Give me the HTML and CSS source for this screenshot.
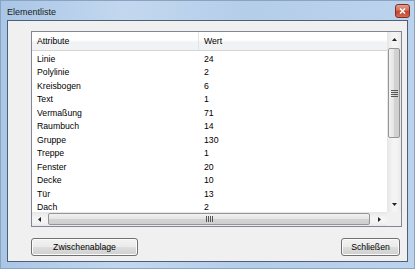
FILE: index.html
```html
<!DOCTYPE html>
<html>
<head>
  <title>Elementliste</title>
  <link rel="stylesheet" href="styles.css">
</head>
<body>
  <div class="window">
    <div class="titlebar">
      <span class="title">Elementliste</span>
      <span class="close-btn">
        <svg width="7" height="6" viewBox="0 0 7 6"><path d="M1 0.5 L6 5.5 M6 0.5 L1 5.5" stroke="#fff" stroke-width="1.6"/></svg>
      </span>
    </div>
    <div class="client">
      <div class="listview">
        <div class="list-area">
          <div class="list-header">
            <div class="hcol col-attr">Attribute</div>
            <div class="hcol col-val">Wert</div>
          </div>
          <div class="rows">
            <div class="row"><span class="cell-attr">Linie</span><span>24</span></div>
            <div class="row"><span class="cell-attr">Polylinie</span><span>2</span></div>
            <div class="row"><span class="cell-attr">Kreisbogen</span><span>6</span></div>
            <div class="row"><span class="cell-attr">Text</span><span>1</span></div>
            <div class="row"><span class="cell-attr">Vermaßung</span><span>71</span></div>
            <div class="row"><span class="cell-attr">Raumbuch</span><span>14</span></div>
            <div class="row"><span class="cell-attr">Gruppe</span><span>130</span></div>
            <div class="row"><span class="cell-attr">Treppe</span><span>1</span></div>
            <div class="row"><span class="cell-attr">Fenster</span><span>20</span></div>
            <div class="row"><span class="cell-attr">Decke</span><span>10</span></div>
            <div class="row"><span class="cell-attr">Tür</span><span>13</span></div>
            <div class="row"><span class="cell-attr">Dach</span><span>2</span></div>
          </div>
        </div>
        <div class="vscroll">
          <div class="arrow arrow-v"><svg width="5" height="3" viewBox="0 0 5 3"><path d="M0 3 L2.5 0 L5 3 Z" fill="#222"/></svg></div>
          <div class="track-v"><div class="thumb thumb-v"><span class="grip-v"></span></div></div>
          <div class="arrow arrow-v"><svg width="5" height="3" viewBox="0 0 5 3"><path d="M0 0 L2.5 3 L5 0 Z" fill="#222"/></svg></div>
        </div>
        <div class="hscroll">
          <div class="arrow arrow-h"><svg width="3" height="5" viewBox="0 0 3 5"><path d="M3 0 L0 2.5 L3 5 Z" fill="#222"/></svg></div>
          <div class="track-h"><div class="thumb thumb-h"><span class="grip-h"></span></div></div>
          <div class="arrow arrow-h"><svg width="3" height="5" viewBox="0 0 3 5"><path d="M0 0 L3 2.5 L0 5 Z" fill="#222"/></svg></div>
        </div>
        <div class="corner"></div>
      </div>
      <div class="buttons">
        <button class="btn btn-copy">Zwischenablage</button>
        <button class="btn btn-close">Schließen</button>
      </div>
    </div>
  </div>
</body>
</html>
```

FILE: styles.css
```css
body { margin: 0; font-family: "Liberation Sans", Arial, sans-serif; font-size: 8.7px; color: #000; }

.window {
  width: 415px; height: 269px; box-sizing: border-box;
  padding: 0 6px 6px 6px;
  display: flex; flex-direction: column;
  background: linear-gradient(90deg, #a9c6e6 0%, #c3d8ef 30%, #b4cde9 60%, #bcd3ed 100%);
  border: 1px solid #8aa3c2;
}
.titlebar {
  height: 19px; flex: none;
  display: flex; align-items: center; justify-content: space-between;
}
.title { font-size: 9px; margin-top: 2px; color: #1a1a1a; }
.close-btn {
  width: 13px; height: 12px; margin-top: 1px; margin-right: -2px;
  display: flex; align-items: center; justify-content: center;
  border: 1px solid #7b3128; border-radius: 3px;
  background: linear-gradient(#e2a18f 0%, #d16a55 45%, #c2432c 55%, #d76a50 100%);
}

.client {
  flex: 1;
  background: #f0f0f0;
  border: 1px solid #4e5f78;
  padding: 10px 8px 0 23px;
  display: flex; flex-direction: column;
}

.listview {
  width: 371px; height: 196px; box-sizing: border-box;
  border: 1px solid #828790;
  background: #fff;
  display: grid;
  grid-template-columns: 355px 14px;
  grid-template-rows: 180px 14px;
}
.list-area { overflow: hidden; }
.list-header {
  height: 18px;
  display: flex;
  background: linear-gradient(#ffffff 0%, #ffffff 45%, #f1f2f4 55%, #f1f2f4 100%);
  border-bottom: 1px solid #d5d5d5;
}
.hcol { display: flex; align-items: center; }
.col-attr { width: 161px; padding-left: 5px; border-right: 1px solid #e3e4e6; }
.col-val { padding-left: 5px; }
.rows { padding-top: 1.5px; }
.row { display: flex; height: 13.5px; line-height: 13.5px; }
.cell-attr { width: 167px; padding-left: 5px; }

.vscroll {
  display: flex; flex-direction: column;
  background: linear-gradient(90deg, #e6e6e6, #f4f4f4 40%, #f4f4f4 70%, #e9e9e9);
}
.hscroll {
  display: flex;
  background: linear-gradient(#e6e6e6, #f4f4f4 40%, #f4f4f4 70%, #e9e9e9);
}
.corner { background: #f0f0f0; }
.arrow { display: flex; align-items: center; justify-content: center; }
.arrow-v { height: 15px; flex: none; }
.arrow-h { width: 15px; flex: none; }
.track-v { flex: 1; }
.track-h { flex: 1; display: flex; }
.thumb {
  box-sizing: border-box;
  border: 1px solid #959595; border-radius: 2px;
  display: flex; align-items: center; justify-content: center;
}
.thumb-v {
  height: 90px; margin: 1px 1px 0 1px;
  background: linear-gradient(90deg, #f2f2f2, #e4e4e4 50%, #d3d3d3 50%, #cfcfcf);
}
.thumb-h {
  width: 322px; margin: 1px 0 1px 1px;
  background: linear-gradient(#f2f2f2, #e4e4e4 50%, #d3d3d3 50%, #cfcfcf);
}
.grip-v {
  width: 7px; height: 7px;
  background: repeating-linear-gradient(#555 0 1px, transparent 1px 2px);
}
.grip-h {
  width: 7px; height: 6px;
  background: repeating-linear-gradient(90deg, #555 0 1px, transparent 1px 2px);
}

.buttons {
  display: flex; justify-content: space-between;
  margin-top: 11px;
  width: 369px;
}
.btn {
  height: 18px; padding: 0;
  font-family: "Liberation Sans", Arial, sans-serif; font-size: 8.7px; color: #000;
  border: 1px solid #707070; border-radius: 3px;
  background: linear-gradient(#f2f2f2 0%, #ebebeb 48%, #dddddd 52%, #cfcfcf 100%);
  box-shadow: inset 0 0 0 1px #fcfcfc;
}
.btn-copy { width: 107px; }
.btn-close { width: 59px; }
```
